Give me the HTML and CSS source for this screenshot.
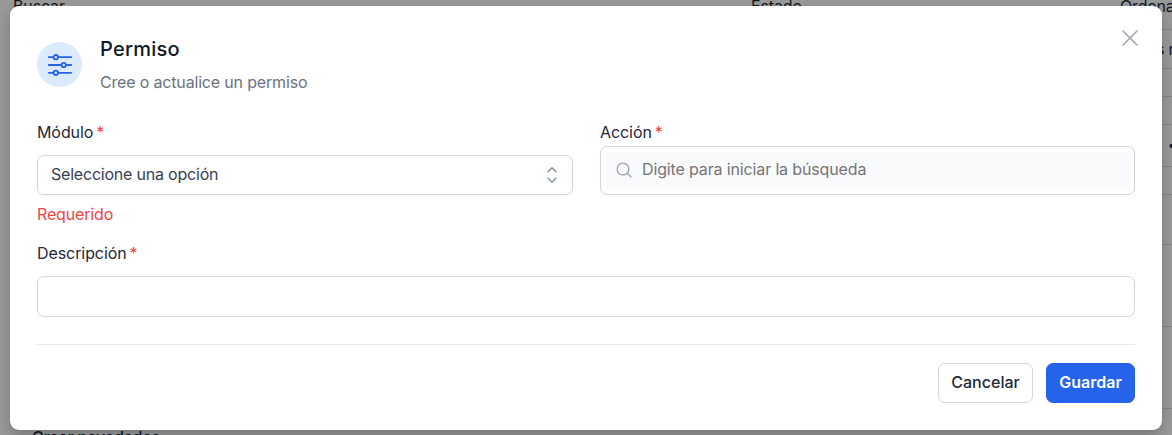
FILE: index.html
```
<!DOCTYPE html>
<html lang="es">
<head>
<meta charset="utf-8">
<title>Permiso</title>
<link rel="stylesheet" href="styles.css">
</head>
<body>
<div class="page">
  <div class="filters">
    <span class="filter-search">Buscar</span>
    <span class="filter-state">Estado</span>
    <span class="filter-order">Ordenar</span>
  </div>
  <div class="side">
    <div class="side-row row-select">s r</div>
    <div class="side-row row-a"></div>
    <div class="side-row row-b"></div>
    <div class="side-row row-c">•</div>
    <div class="side-row row-a"></div>
    <div class="side-row row-d"></div>
    <div class="side-row row-e"></div>
    <div class="side-row row-e"></div>
    <div class="side-row"></div>
  </div>
  <div class="list-item">Crear novedades</div>
</div>
<div class="modal">
  <header class="head">
    <div class="badge">
      <svg width="26" height="22" viewBox="0 0 26 22" fill="none" stroke="currentColor" stroke-width="1.8" stroke-linecap="round">
        <path d="M1.8 3.2H6.3M11.3 3.2H24.2M1.8 11H14.2M19.2 11H24.2M1.8 18.8H6.3M11.3 18.8H24.2"/>
        <circle cx="8.8" cy="3.2" r="2.2"/><circle cx="16.7" cy="11" r="2.2"/><circle cx="8.8" cy="18.8" r="2.2"/>
      </svg>
    </div>
    <div class="titles">
      <h1 class="title">Permiso</h1>
      <p class="subtitle">Cree o actualice un permiso</p>
    </div>
    <svg class="close" width="18" height="18" viewBox="0 0 18 18" fill="none" stroke="currentColor" stroke-width="1.5" stroke-linecap="round"><path d="M2 2l14 14M16 2L2 16"/></svg>
  </header>
  <div class="columns">
    <div class="field">
      <label class="label">Módulo<span class="star">*</span></label>
      <div class="select">
        <span>Seleccione una opción</span>
        <svg width="12" height="18" viewBox="0 0 12 18" fill="none" stroke="currentColor" stroke-width="1.7" stroke-linecap="round" stroke-linejoin="round"><path d="M2 5.8l4-4 4 4M2 12.2l4 4 4-4"/></svg>
      </div>
      <div class="error">Requerido</div>
    </div>
    <div class="field">
      <label class="label">Acción<span class="star">*</span></label>
      <div class="search">
        <div class="search-inner">
          <svg width="16" height="16" viewBox="0 0 16 16" fill="none" stroke="currentColor" stroke-width="1.3" stroke-linecap="round"><circle cx="7" cy="7" r="5.9"/><path d="M11.3 11.3l3.7 3.7"/></svg>
          <span>Digite para iniciar la búsqueda</span>
        </div>
      </div>
    </div>
  </div>
  <div class="field">
    <label class="label">Descripción<span class="star">*</span></label>
    <div class="input"></div>
  </div>
  <footer class="actions">
    <button class="btn cancel">Cancelar</button>
    <button class="btn save">Guardar</button>
  </footer>
</div>
</body>
</html>
```
FILE: styles.css
```
* { box-sizing: border-box; }
body {
  margin: 0;
  width: 1172px;
  height: 435px;
  overflow: hidden;
  position: relative;
  background: #999;
  font-family: Inter, "Liberation Sans", sans-serif;
  font-size: 16px;
  color: #111827;
}
.page { height: 435px; overflow: hidden; display: flex; flex-direction: column; }
.filters {
  display: grid;
  grid-template-columns: 738px 369px 1fr;
  height: 29px;
  padding-left: 13px;
  line-height: 20px;
  margin-top: -4px;
  margin-bottom: 4px;
  flex: none;
  white-space: nowrap;
  letter-spacing: -.15px;
}
.side { width: 12px; margin-left: auto; height: 380px; flex: none; }
.side-row { border-top: 1px solid #858585; }
.row-select { height: 39px; line-height: 38px; white-space: nowrap; text-indent: -4px; letter-spacing: -.2px; }
.row-a { height: 28px; }
.row-b { height: 28px; }
.row-c { height: 42px; line-height: 40px; font-size: 12px; padding-left: 8px; }
.row-d { height: 50px; }
.row-e { height: 82px; }
.list-item { flex: none; line-height: 20px; margin: 18px 0 0 32px; font-weight: 500; letter-spacing: -.2px; }
.modal {
  position: absolute;
  left: 10px;
  top: 6px;
  width: 1152px;
  height: 424px;
  padding: 27px;
  background: #fff;
  border-radius: 9px;
  box-shadow: 0 6px 14px rgba(0, 0, 0, .22);
}
.head { display: flex; height: 87px; }
.badge {
  width: 45px;
  height: 45px;
  margin: 9px 18px 0 0;
  border-radius: 50%;
  background: #dbeafe;
  color: #2563eb;
  display: flex;
  align-items: center;
  justify-content: center;
}
.titles { flex: 1; }
.title { margin: 0; font-size: 20px; line-height: 32px; font-weight: 500; letter-spacing: .25px; }
.subtitle { margin: 5px 0 0; line-height: 24px; color: #6b7280; letter-spacing: -.17px; }
.close { margin: -4px -4px 0 0; color: #9ca3af; }
.columns { display: grid; grid-template-columns: 536px 535px; column-gap: 27px; height: 121px; }
.label { display: flex; height: 26px; line-height: 24px; color: #1f2937; letter-spacing: -.08px; }
.star { color: #ef4444; margin-left: 3px; }
.select {
  display: flex;
  align-items: center;
  justify-content: space-between;
  height: 40px;
  margin-top: 9px;
  padding: 0 14px 2px 13px;
  border: 1px solid #d1d5db;
  border-radius: 7px;
  color: #374151;
  box-shadow: 0 1px 2px rgba(0, 0, 0, .05);
  letter-spacing: -.21px;
}
.select svg { color: #9ca3af; margin-top: 2px; }
.error { margin-top: 7px; line-height: 24px; color: #ef4444; letter-spacing: -.15px; }
.search { height: 49px; padding: 5px; border: 1px solid #d1d5db; border-radius: 7px; }
.search-inner {
  display: flex;
  align-items: center;
  gap: 10px;
  height: 37px;
  padding: 0 10px 3px;
  background: #f9fafb;
  color: #757575;
  letter-spacing: -.14px;
}
.search-inner svg { color: #9ca3af; margin-top: 2px; }
.input {
  height: 41px;
  margin-top: 9px;
  border: 1px solid #d1d5db;
  border-radius: 7px;
}
.actions {
  display: flex;
  justify-content: flex-end;
  gap: 13px;
  margin-top: 27px;
  padding-top: 18px;
  border-top: 1px solid #e5e7eb;
}
.btn {
  height: 40px;
  padding: 0 0 2px;
  font: 500 16px Inter, "Liberation Sans", sans-serif;
  border: 1px solid #d1d5db;
  border-radius: 7px;
}
.cancel { width: 95px; background: #fff; color: #1f2937; }
.save { width: 89px; background: #2563eb; border-color: #2563eb; color: #fff; font-weight: 600; }
```
